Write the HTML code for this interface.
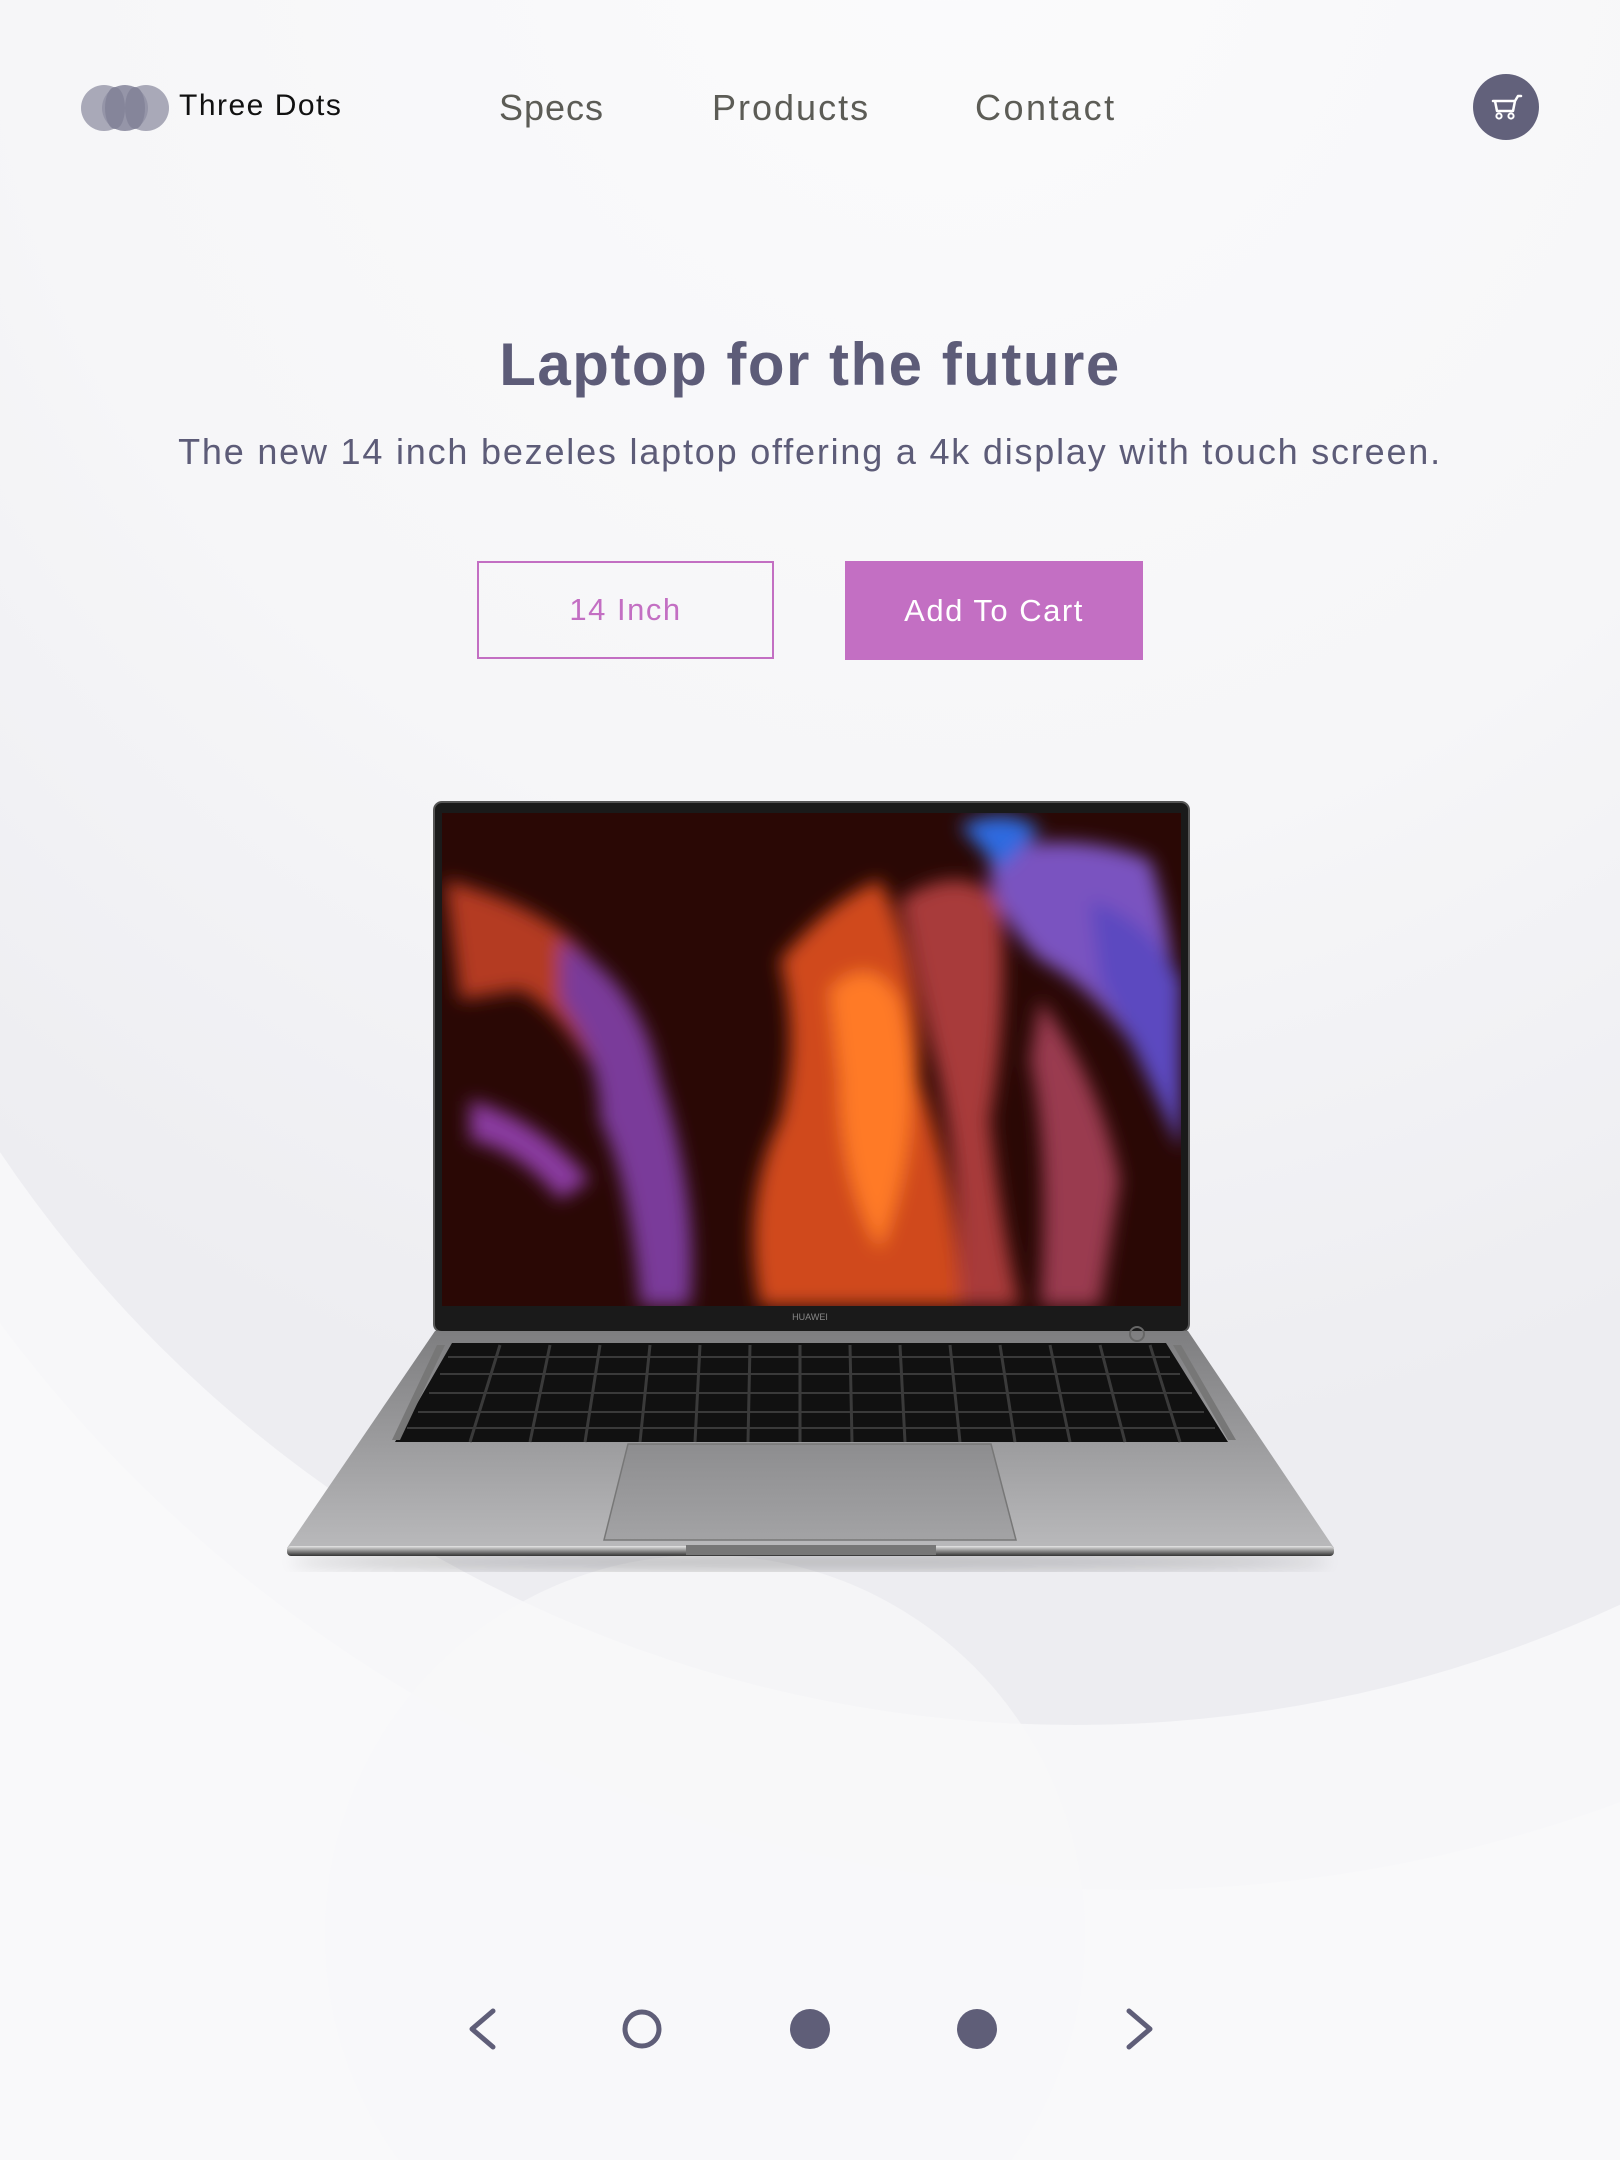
<!DOCTYPE html>
<html><head><meta charset="utf-8"><style>
html,body{margin:0;padding:0;width:1620px;height:2160px;overflow:hidden}
body{position:relative;background:#f9f9fa;font-family:"Liberation Sans",sans-serif}
.bg{position:absolute;left:0;top:0}
.t{position:absolute;white-space:nowrap}
</style></head><body>
<svg class="bg" width="1620" height="2160">
<defs>
<radialGradient id="ga" cx="0.45" cy="0.3" r="0.6"><stop offset="0" stop-color="#fbfbfc"/><stop offset=".6" stop-color="#f6f6f8"/><stop offset="1" stop-color="#ededf1"/></radialGradient>
</defs>
<rect width="1620" height="2160" fill="#f9f9fa"/>
<circle cx="1130" cy="480" r="1410" fill="#f7f7f9"/>
<circle cx="1075" cy="430" r="1295" fill="url(#ga)"/>
<circle cx="705" cy="1935" r="380" fill="#f8f8f9" opacity=".7"/>
</svg>

<!-- header -->
<svg style="position:absolute;left:80px;top:84px" width="90" height="48">
<circle cx="24" cy="24" r="23" fill="#a9a9b8"/><circle cx="66" cy="24" r="23" fill="#a9a9b8"/>
<circle cx="45" cy="24" r="23" fill="#9595a8"/>
<ellipse cx="35" cy="24" rx="10" ry="21" fill="#85859a"/><ellipse cx="55" cy="24" rx="10" ry="21" fill="#85859a"/>
</svg>
<div class="t" style="left:179px;top:89px;font-size:30px;color:#111;letter-spacing:1.5px">Three Dots</div>
<div class="t" style="left:499px;top:87px;font-size:36px;color:#5c5c56;letter-spacing:1px">Specs</div>
<div class="t" style="left:712px;top:87px;font-size:36px;color:#5c5c56;letter-spacing:2px">Products</div>
<div class="t" style="left:975px;top:87px;font-size:36px;color:#5c5c56;letter-spacing:2.5px">Contact</div>
<svg style="position:absolute;left:1473px;top:74px" width="66" height="66">
<circle cx="33" cy="33" r="33" fill="#62617b"/>
<path d="M20 27 H42 L45 22 H48 M22 27 L24 37 H40 L42 27" fill="none" stroke="#fff" stroke-width="2.5" stroke-linejoin="round" stroke-linecap="round"/>
<circle cx="26" cy="42" r="2.6" fill="none" stroke="#fff" stroke-width="2"/><circle cx="38" cy="42" r="2.6" fill="none" stroke="#fff" stroke-width="2"/>
</svg>

<!-- hero -->
<div class="t" style="left:0;width:1620px;text-align:center;top:330px;font-size:60px;font-weight:bold;color:#5d5c78;letter-spacing:1.5px">Laptop for the future</div>
<div class="t" style="left:0;width:1620px;text-align:center;top:431px;font-size:36px;color:#5d5c78;letter-spacing:1.8px">The new 14 inch bezeles laptop offering a 4k display with touch screen.</div>
<div class="t" style="left:477px;top:561px;width:293px;height:94px;border:2.5px solid #c36fc3;color:#c36fc3;font-size:31px;text-align:center;line-height:94px;letter-spacing:1.5px">14 Inch</div>
<div class="t" style="left:845px;top:561px;width:298px;height:99px;background:#c36fc3;color:#fff;font-size:31px;text-align:center;line-height:99px;letter-spacing:1.5px">Add To Cart</div>

<!-- laptop -->
<svg style="position:absolute;left:0;top:0" width="1620" height="1600">
<defs>
<filter id="bl" x="-50%" y="-50%" width="200%" height="200%"><feGaussianBlur stdDeviation="9"/></filter>
<filter id="bl2"><feGaussianBlur stdDeviation="8"/></filter>
<clipPath id="scr"><rect x="442" y="813" width="739" height="493"/></clipPath>
<linearGradient id="base" x1="0" y1="0" x2="0" y2="1"><stop offset="0" stop-color="#7e7e80"/><stop offset=".4" stop-color="#959597"/><stop offset="1" stop-color="#b9b9bb"/></linearGradient>
<linearGradient id="pad" x1="0" y1="0" x2="0" y2="1"><stop offset="0" stop-color="#8d8d8f"/><stop offset="1" stop-color="#a3a3a5"/></linearGradient>
<linearGradient id="lip" x1="0" y1="0" x2="0" y2="1"><stop offset="0" stop-color="#e6e6e6"/><stop offset=".5" stop-color="#8a8a8a"/><stop offset="1" stop-color="#333"/></linearGradient>
</defs>
<ellipse cx="810" cy="1562" rx="520" ry="8" fill="#000" opacity=".25" filter="url(#bl2)"/>
<rect x="434" y="802" width="755" height="530" rx="8" fill="#1a1a1a" stroke="#555" stroke-width="2"/>
<g clip-path="url(#scr)">
<rect x="442" y="813" width="739" height="493" fill="#2a0805"/>
<g filter="url(#bl)">
<path d="M445 880 Q520 900 560 930 Q600 960 650 1040 L600 1080 Q560 1010 520 990 L460 1000Z" fill="#b43a22"/>
<path d="M560 940 Q640 980 660 1080 Q700 1200 690 1306 L640 1306 Q630 1180 600 1120 Q600 1060 560 1000Z" fill="#7a3a9a"/>
<path d="M470 1100 Q540 1120 590 1180 L560 1200 Q520 1150 470 1140Z" fill="#8a3aa0"/>
<path d="M780 960 Q830 900 880 880 Q920 960 920 1080 Q960 1200 960 1306 L760 1306 Q740 1200 780 1120 Q800 1040 780 960Z" fill="#d0481a"/>
<path d="M830 990 Q870 950 900 1000 Q930 1120 880 1250 Q840 1180 840 1080Z" fill="#ff7a28"/>
<path d="M900 900 Q960 860 1000 900 Q1010 1000 990 1120 Q1000 1220 1020 1306 L960 1306 Q960 1150 930 1040Z" fill="#a83a3a"/>
<path d="M990 850 Q1080 830 1150 860 Q1181 950 1181 1130 Q1120 1000 1040 960 Q1000 920 990 880Z" fill="#7a52c0"/>
<path d="M960 825 Q1010 805 1040 830 L1000 870Z" fill="#2f6ae0"/>
<path d="M1040 1000 Q1100 1080 1120 1180 L1100 1306 L1040 1306 Q1050 1150 1030 1060Z" fill="#9a3a50"/>
<path d="M1090 900 Q1150 920 1181 980 L1181 1150 Q1140 1060 1100 980Z" fill="#5c4ac0"/>
</g>
</g>
<text x="810" y="1320" text-anchor="middle" font-size="9" fill="#888" font-family="Liberation Sans">HUAWEI</text>
<path d="M435 1331 H1188 L1334 1548 H287Z" fill="url(#base)"/>
<path d="M452 1343 H1166 L1228 1442 H395Z" fill="#111"/>
<g stroke="#3a3a3a" stroke-width="2">
<line x1="448" y1="1357" x2="1170" y2="1357"/><line x1="440" y1="1374" x2="1180" y2="1374"/><line x1="429" y1="1393" x2="1192" y2="1393"/><line x1="418" y1="1412" x2="1204" y2="1412"/><line x1="407" y1="1428" x2="1215" y2="1428"/>
</g>
<g stroke="#3a3a3a" stroke-width="3">
<path d="M500 1345 L470 1442 M550 1345 L530 1442 M600 1345 L585 1442 M650 1345 L640 1442 M700 1345 L695 1442 M750 1345 L748 1442 M800 1345 L800 1442 M850 1345 L852 1442 M900 1345 L905 1442 M950 1345 L960 1442 M1000 1345 L1015 1442 M1050 1345 L1070 1442 M1100 1345 L1125 1442 M1150 1345 L1180 1442"/>
</g>
<path d="M445 1345 L400 1440 L392 1440 L437 1345Z" fill="#777"/>
<path d="M1173 1345 L1228 1440 L1236 1440 L1181 1345Z" fill="#777"/>
<path d="M628 1444 H991 L1016 1540 H604Z" fill="url(#pad)" stroke="#777" stroke-width="1.5"/>
<rect x="287" y="1546" width="1047" height="10" rx="4" fill="url(#lip)"/>
<rect x="686" y="1545" width="250" height="10" fill="#777"/>
<circle cx="1137" cy="1334" r="7" fill="none" stroke="#666" stroke-width="2"/>
</svg>

<!-- pager -->
<svg style="position:absolute;left:440px;top:1995px" width="740" height="70">
<path d="M53 16 L32 34 L53 52" fill="none" stroke="#5f5e78" stroke-width="5" stroke-linecap="round" stroke-linejoin="round"/>
<circle cx="202" cy="34" r="17" fill="none" stroke="#5f5e78" stroke-width="5"/>
<circle cx="370" cy="34" r="20" fill="#5f5e78"/>
<circle cx="537" cy="34" r="20" fill="#5f5e78"/>
<path d="M689 16 L710 34 L689 52" fill="none" stroke="#5f5e78" stroke-width="5" stroke-linecap="round" stroke-linejoin="round"/>
</svg>
</body></html>
